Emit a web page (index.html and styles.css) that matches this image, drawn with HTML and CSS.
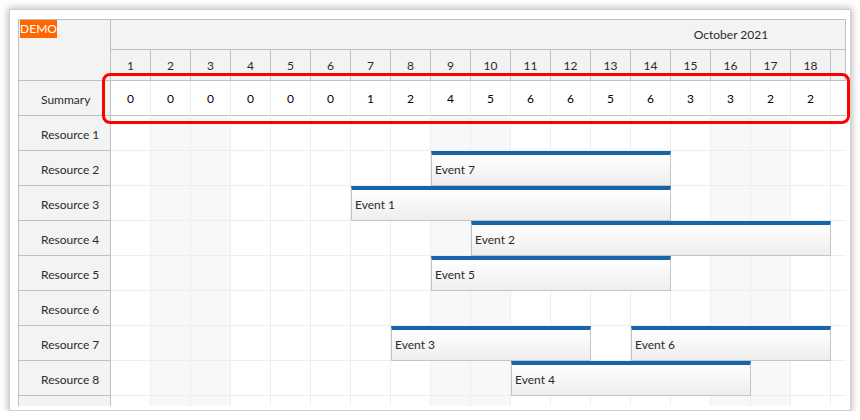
FILE: index.html
```html
<!DOCTYPE html>
<html>
<head>
<meta charset="utf-8">
<link rel="stylesheet" href="styles.css">
</head>
<body>
<div class="frame">
  <div class="scheduler">
    <div class="corner"><span class="demo">DEMO</span></div>
    <div class="timeheader">
      <div class="month-row"><div class="month">October 2021</div></div>
      <div class="day-row">
        <div class="day">1</div><div class="day">2</div><div class="day">3</div><div class="day">4</div><div class="day">5</div><div class="day">6</div><div class="day">7</div><div class="day">8</div><div class="day">9</div><div class="day">10</div><div class="day">11</div><div class="day">12</div><div class="day">13</div><div class="day">14</div><div class="day">15</div><div class="day">16</div><div class="day">17</div><div class="day">18</div><div class="day"></div>
      </div>
    </div>
    <div class="rowheaders">
      <div class="rh">Summary</div>
      <div class="rh">Resource 1</div>
      <div class="rh">Resource 2</div>
      <div class="rh">Resource 3</div>
      <div class="rh">Resource 4</div>
      <div class="rh">Resource 5</div>
      <div class="rh">Resource 6</div>
      <div class="rh">Resource 7</div>
      <div class="rh">Resource 8</div>
      <div class="rh"></div>
    </div>
    <div class="grid">
      <div class="row summary">
        <div class="c">0</div><div class="c">0</div><div class="c">0</div><div class="c">0</div><div class="c">0</div><div class="c">0</div><div class="c">1</div><div class="c">2</div><div class="c">4</div><div class="c">5</div><div class="c">6</div><div class="c">6</div><div class="c">5</div><div class="c">6</div><div class="c">3</div><div class="c">3</div><div class="c">2</div><div class="c">2</div><div class="c"></div>
      </div>
      <div class="row">
        <div class="c"></div><div class="c we"></div><div class="c we"></div><div class="c"></div><div class="c"></div><div class="c"></div><div class="c"></div><div class="c"></div><div class="c we"></div><div class="c we"></div><div class="c"></div><div class="c"></div><div class="c"></div><div class="c"></div><div class="c"></div><div class="c we"></div><div class="c we"></div><div class="c"></div><div class="c"></div>
      </div>
      <div class="row">
        <div class="c"></div><div class="c we"></div><div class="c we"></div><div class="c"></div><div class="c"></div><div class="c"></div><div class="c"></div><div class="c"></div><div class="c we"></div><div class="c we"></div><div class="c"></div><div class="c"></div><div class="c"></div><div class="c"></div><div class="c"></div><div class="c we"></div><div class="c we"></div><div class="c"></div><div class="c"></div>
        <div class="event" style="left:320px;width:240px">Event 7</div>
      </div>
      <div class="row">
        <div class="c"></div><div class="c we"></div><div class="c we"></div><div class="c"></div><div class="c"></div><div class="c"></div><div class="c"></div><div class="c"></div><div class="c we"></div><div class="c we"></div><div class="c"></div><div class="c"></div><div class="c"></div><div class="c"></div><div class="c"></div><div class="c we"></div><div class="c we"></div><div class="c"></div><div class="c"></div>
        <div class="event" style="left:240px;width:320px">Event 1</div>
      </div>
      <div class="row">
        <div class="c"></div><div class="c we"></div><div class="c we"></div><div class="c"></div><div class="c"></div><div class="c"></div><div class="c"></div><div class="c"></div><div class="c we"></div><div class="c we"></div><div class="c"></div><div class="c"></div><div class="c"></div><div class="c"></div><div class="c"></div><div class="c we"></div><div class="c we"></div><div class="c"></div><div class="c"></div>
        <div class="event" style="left:360px;width:360px">Event 2</div>
      </div>
      <div class="row">
        <div class="c"></div><div class="c we"></div><div class="c we"></div><div class="c"></div><div class="c"></div><div class="c"></div><div class="c"></div><div class="c"></div><div class="c we"></div><div class="c we"></div><div class="c"></div><div class="c"></div><div class="c"></div><div class="c"></div><div class="c"></div><div class="c we"></div><div class="c we"></div><div class="c"></div><div class="c"></div>
        <div class="event" style="left:320px;width:240px">Event 5</div>
      </div>
      <div class="row">
        <div class="c"></div><div class="c we"></div><div class="c we"></div><div class="c"></div><div class="c"></div><div class="c"></div><div class="c"></div><div class="c"></div><div class="c we"></div><div class="c we"></div><div class="c"></div><div class="c"></div><div class="c"></div><div class="c"></div><div class="c"></div><div class="c we"></div><div class="c we"></div><div class="c"></div><div class="c"></div>
      </div>
      <div class="row">
        <div class="c"></div><div class="c we"></div><div class="c we"></div><div class="c"></div><div class="c"></div><div class="c"></div><div class="c"></div><div class="c"></div><div class="c we"></div><div class="c we"></div><div class="c"></div><div class="c"></div><div class="c"></div><div class="c"></div><div class="c"></div><div class="c we"></div><div class="c we"></div><div class="c"></div><div class="c"></div>
        <div class="event" style="left:280px;width:200px">Event 3</div>
        <div class="event" style="left:520px;width:200px">Event 6</div>
      </div>
      <div class="row">
        <div class="c"></div><div class="c we"></div><div class="c we"></div><div class="c"></div><div class="c"></div><div class="c"></div><div class="c"></div><div class="c"></div><div class="c we"></div><div class="c we"></div><div class="c"></div><div class="c"></div><div class="c"></div><div class="c"></div><div class="c"></div><div class="c we"></div><div class="c we"></div><div class="c"></div><div class="c"></div>
        <div class="event" style="left:400px;width:240px">Event 4</div>
      </div>
      <div class="row">
        <div class="c"></div><div class="c we"></div><div class="c we"></div><div class="c"></div><div class="c"></div><div class="c"></div><div class="c"></div><div class="c"></div><div class="c we"></div><div class="c we"></div><div class="c"></div><div class="c"></div><div class="c"></div><div class="c"></div><div class="c"></div><div class="c we"></div><div class="c we"></div><div class="c"></div><div class="c"></div>
      </div>
    </div>
  </div>
  <div class="highlight"></div>
</div>
</body>
</html>
```
FILE: styles.css
```css
* { box-sizing: border-box; }
html, body { margin: 0; padding: 0; background: #fff; }
body {
  font-family: Lato, "Liberation Sans", sans-serif;
  font-size: 12px;
  color: #2b2b2b;
}
.frame {
  position: relative;
  margin: 9px 0 0 9px;
  width: 842px;
  height: 402px;
  padding: 9px 0 0 8px;
  background: #fff;
  border: 1px solid #cfcfcf;
  box-shadow: 0 0 7px 1px rgba(0, 0, 0, 0.28);
}
.scheduler {
  display: grid;
  grid-template-columns: 92px 735px;
  grid-template-rows: 61px 325px;
  width: 828px;
  height: 387px;
  border-top: 1px solid #c0c0c0;
  border-left: 1px solid #c0c0c0;
  overflow: hidden;
}
.corner {
  position: relative;
  background: #f3f3f3;
  border-right: 1px solid #c0c0c0;
  border-bottom: 1px solid #c0c0c0;
}
.demo {
  position: absolute;
  left: 1px;
  top: 0;
  width: 37px;
  height: 18px;
  line-height: 18px;
  background: #ff6600;
  color: #fff;
  text-align: center;
  font-size: 12px;
}
.timeheader {
  background: #f3f3f3;
  border-right: 1px solid #c0c0c0;
  overflow: hidden;
}
.month-row {
  height: 30px;
  border-bottom: 1px solid #c0c0c0;
  overflow: hidden;
}
.month {
  width: 1240px;
  height: 29px;
  line-height: 30px;
  text-align: center;
}
.day-row {
  display: flex;
  height: 31px;
  border-bottom: 1px solid #c0c0c0;
}
.day {
  flex: 0 0 40px;
  height: 30px;
  line-height: 31px;
  text-align: center;
  border-right: 1px solid #c0c0c0;
}
.rowheaders {
  background: #f3f3f3;
  border-right: 1px solid #c0c0c0;
}
.rh {
  height: 35px;
  line-height: 34px;
  padding: 2px 0 0 22px;
  border-bottom: 1px solid #c0c0c0;
  white-space: nowrap;
}
.grid { overflow: hidden; }
.row {
  position: relative;
  display: flex;
  height: 35px;
}
.c {
  flex: 0 0 40px;
  height: 35px;
  border-right: 1px solid #eeeeee;
  border-bottom: 1px solid #eeeeee;
  background: #fff;
}
.c.we { background: #f8f8f8; }
.summary .c {
  line-height: 36px;
  text-align: center;
  color: #000;
  border-bottom-color: #c0c0c0;
}
.event {
  position: absolute;
  top: 0;
  height: 35px;
  padding-left: 3px;
  line-height: 30px;
  white-space: nowrap;
  color: #2b2b2b;
  background: linear-gradient(#ffffff, #eeeeee);
  border: 1px solid #c4c4c4;
  border-top: 4px solid #1565a8;
}
.highlight {
  position: absolute;
  left: 92px;
  top: 63px;
  width: 748px;
  height: 51px;
  border: 3px solid #ff0000;
  border-radius: 8px;
}
```
